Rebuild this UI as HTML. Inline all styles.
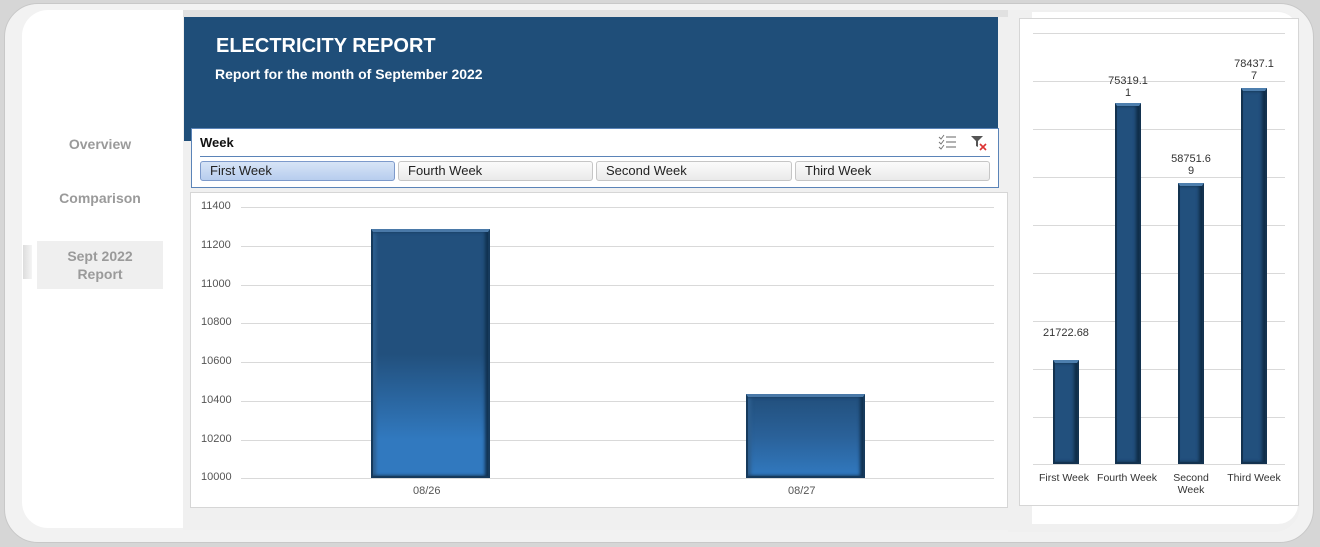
<!DOCTYPE html>
<html><head><meta charset="utf-8"><style>
*{margin:0;padding:0;box-sizing:border-box}
body{width:1320px;height:547px;background:#d6d6d6;font-family:"Liberation Sans",sans-serif;position:relative;overflow:hidden}
.abs{position:absolute}
.frame{left:4px;top:3px;width:1310px;height:540px;background:#f2f2f2;border-radius:34px;border:1px solid #c8c8c8}
.leftcol{left:22px;top:10px;width:161px;height:518px;background:#fff;border-radius:26px 0 0 26px}
.mid{left:183px;top:10px;width:825px;height:520px;background:#f0f0f0}
.midtop{left:183px;top:10px;width:825px;height:7px;background:#e1e1e1}
.header{left:184px;top:17px;width:814px;height:124px;background:#1f4e79}
.nav{color:#9a9a9a;font-weight:bold;font-size:14px;text-align:center;width:126px;left:37px}
.slicer{left:191px;top:128px;width:808px;height:60px;background:#fff;border:1px solid #5b84b8}
.btn{position:absolute;top:32px;height:20px;border:1px solid #c6c6c6;border-radius:3px;background:linear-gradient(#fbfbfb,#eaeaea);font-size:13px;padding-left:9px;line-height:18px;color:#222}
.chart{left:190px;top:192px;width:818px;height:316px;background:#fff;border:1px solid #d6d6d6}
.yl{position:absolute;left:10px;font-size:11px;color:#555;width:32px}
.gl{position:absolute;left:50px;width:753px;height:1px;background:#d9d9d9}
.bar{position:absolute;border:2px solid #163a5c;border-top:3px solid #4a79a8;box-shadow:inset -3px 0 3px #10304f,inset 3px 0 3px #2e5f8f}
.rpanel{left:1008px;top:10px;width:292px;height:522px;background:#f0f0f0;border-radius:0 26px 26px 0}
.rwhite{left:1032px;top:12px;width:266px;height:512px;background:#fff;border-radius:0 20px 20px 0}
.rchart{left:1019px;top:18px;width:280px;height:488px;background:#fff;border:1px solid #d6d6d6}
.rgl{position:absolute;left:13px;width:252px;height:1px;background:#d9d9d9}
.rbar{position:absolute;width:26px;background:#22507d;border:2px solid #13324f;border-top:3px solid #4e7fae;box-shadow:inset -3px 0 3px #0f2c47}
.rl{position:absolute;font-size:11px;color:#333;text-align:center;line-height:12px}
</style></head><body>
<div class="abs frame"></div>
<div class="abs leftcol"></div>
<div class="abs mid"></div>
<div class="abs midtop"></div>
<div class="abs header">
 <div class="abs" style="left:32px;top:18px;color:#fff;font-weight:bold;font-size:20px">ELECTRICITY REPORT</div>
 <div class="abs" style="left:31px;top:49px;color:#fff;font-weight:bold;font-size:14px">Report for the month of September 2022</div>
</div>
<div class="abs nav" style="top:136px">Overview</div>
<div class="abs nav" style="top:190px">Comparison</div>
<div class="abs" style="left:37px;top:241px;width:126px;height:48px;background:#efefef"></div>
<div class="abs" style="left:23px;top:245px;width:9px;height:34px;background:linear-gradient(90deg,#ddd,#f4f4f4)"></div>
<div class="abs nav" style="top:247px;line-height:18px">Sept 2022<br>Report</div>

<div class="abs slicer">
 <div class="abs" style="left:8px;top:6px;font-weight:bold;font-size:13px;color:#111">Week</div>
 <svg class="abs" style="left:746px;top:5px" width="20" height="16"><path d="M1 3l2 2 3-4M1 8l2 2 3-4M1 13l2 2 3-4" stroke="#777" fill="none" stroke-width="1"/><path d="M8 3h10M8 8h10M8 13h10" stroke="#666" stroke-width="1"/></svg>
 <svg class="abs" style="left:778px;top:5px" width="18" height="18"><path d="M1 2h12l-5 5v6l-2-1V7z" fill="#555"/><path d="M10 10l6 6M16 10l-6 6" stroke="#d33" stroke-width="1.6"/></svg>
 <div class="abs" style="left:8px;top:27px;width:790px;height:1px;background:#5b84b8"></div>
 <div class="btn" style="left:8px;width:195px;background:linear-gradient(#d7e4f6,#b7cdee);border-color:#7d9acb">First Week</div>
 <div class="btn" style="left:206px;width:195px">Fourth Week</div>
 <div class="btn" style="left:404px;width:196px">Second Week</div>
 <div class="btn" style="left:603px;width:195px">Third Week</div>
</div>

<div class="abs chart">
 <div class="yl" style="top:7px">11400</div><div class="gl" style="top:14px"></div>
 <div class="yl" style="top:46px">11200</div><div class="gl" style="top:53px"></div>
 <div class="yl" style="top:85px">11000</div><div class="gl" style="top:92px"></div>
 <div class="yl" style="top:123px">10800</div><div class="gl" style="top:130px"></div>
 <div class="yl" style="top:162px">10600</div><div class="gl" style="top:169px"></div>
 <div class="yl" style="top:201px">10400</div><div class="gl" style="top:208px"></div>
 <div class="yl" style="top:240px">10200</div><div class="gl" style="top:247px"></div>
 <div class="yl" style="top:278px">10000</div><div class="gl" style="top:285px"></div>
 <div class="bar" style="left:180px;top:36px;width:119px;height:249px;background:linear-gradient(#22507d 0%,#22507d 50%,#3179bf 85%,#3179bf)"></div>
 <div class="bar" style="left:555px;top:201px;width:119px;height:84px;background:linear-gradient(#22507d 0%,#2a6199 50%,#3179bf)"></div>
 <div class="abs" style="left:222px;top:292px;font-size:11px;color:#555">08/26</div>
 <div class="abs" style="left:597px;top:292px;font-size:11px;color:#555">08/27</div>
</div>

<div class="abs rpanel"></div>
<div class="abs rwhite"></div>
<div class="abs rchart">
 <div class="rgl" style="top:14px"></div><div class="rgl" style="top:62px"></div><div class="rgl" style="top:110px"></div><div class="rgl" style="top:158px"></div><div class="rgl" style="top:206px"></div><div class="rgl" style="top:254px"></div><div class="rgl" style="top:302px"></div><div class="rgl" style="top:350px"></div><div class="rgl" style="top:398px"></div><div class="rgl" style="top:445px"></div>
 <div class="rbar" style="left:33px;top:341px;height:104px"></div>
 <div class="rbar" style="left:95px;top:84px;height:361px"></div>
 <div class="rbar" style="left:158px;top:164px;height:281px"></div>
 <div class="rbar" style="left:221px;top:69px;height:376px"></div>
 <div class="rl" style="left:16px;top:308px;width:60px">21722.68</div>
 <div class="rl" style="left:78px;top:56px;width:60px">75319.1<br>1</div>
 <div class="rl" style="left:141px;top:134px;width:60px">58751.6<br>9</div>
 <div class="rl" style="left:204px;top:39px;width:60px">78437.1<br>7</div>
 <div class="rl" style="left:14px;top:453px;width:60px;font-size:10.5px">First Week</div>
 <div class="rl" style="left:74px;top:453px;width:66px;font-size:10.5px">Fourth Week</div>
 <div class="rl" style="left:141px;top:453px;width:60px;font-size:10.5px">Second<br>Week</div>
 <div class="rl" style="left:201px;top:453px;width:66px;font-size:10.5px">Third Week</div>
</div>
</body></html>
